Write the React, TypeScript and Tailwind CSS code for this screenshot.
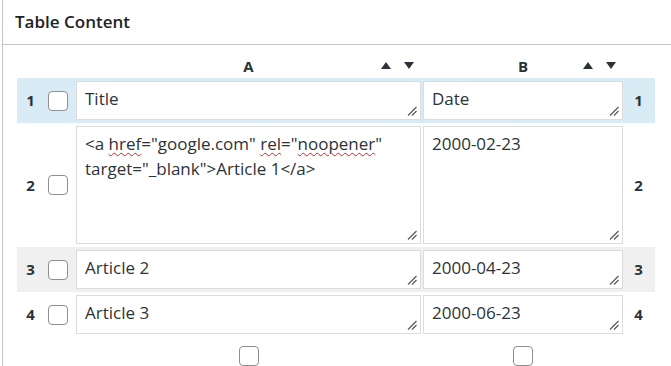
import type { ReactNode } from "react"

const font = { fontFamily: '"Open Sans", "Noto Sans", sans-serif' }

function Grip() {
  return (
    <svg
      className="absolute right-[3px] bottom-[3px]"
      width="10"
      height="10"
      viewBox="0 0 10 10"
    >
      <path d="M1 9.5 L9.5 1" stroke="#5a5a5a" strokeWidth="1.3" />
      <path d="M5 9.5 L9.5 5" stroke="#5a5a5a" strokeWidth="1.3" />
    </svg>
  )
}

function Cell({ w, h, children }: { w: string; h: string; children: ReactNode }) {
  return (
    <div
      className={`relative ${w} ${h} shrink-0 bg-white border border-[#dcdcde] px-2 pt-[4px] text-[17px] leading-[25px] text-[#2c3338]`}
    >
      {children}
      <Grip />
    </div>
  )
}

function Check() {
  return <div className="w-5 h-5 shrink-0 rounded-[4px] border border-[#8c8f94] bg-white" />
}

function Spell({ children }: { children: ReactNode }) {
  return (
    <span className="underline decoration-wavy decoration-[#e02020] decoration-1 underline-offset-[2px]">
      {children}
    </span>
  )
}

function Row({
  n,
  bg,
  h,
  a,
  b,
}: {
  n: number
  bg: string
  h: string
  a: ReactNode
  b: ReactNode
}) {
  return (
    <div className={`flex items-center py-[3px] ${bg}`}>
      <div className="w-[27px] text-center text-[15px] font-bold text-[#2c3338]">{n}</div>
      <div className="ml-[4px]">
        <Check />
      </div>
      <div className="ml-[8px] flex gap-[2px]">
        <Cell w="w-[345px]" h={h}>
          {a}
        </Cell>
        <Cell w="w-[200px]" h={h}>
          {b}
        </Cell>
      </div>
      <div className="w-[31px] text-center text-[15px] font-bold text-[#2c3338]">{n}</div>
    </div>
  )
}

function Arrows() {
  return (
    <div className="flex gap-[13px] items-center">
      <svg width="10" height="7" viewBox="0 0 10 7">
        <path d="M5 0 L10 7 L0 7 Z" fill="#2c3338" />
      </svg>
      <svg width="10" height="7" viewBox="0 0 10 7">
        <path d="M0 0 L10 0 L5 7 Z" fill="#2c3338" />
      </svg>
    </div>
  )
}

export default function App() {
  return (
    <div className="w-[671px] h-[366px] overflow-hidden bg-white" style={font}>
      <div className="ml-[2px] border-l border-[#c3c4c7] h-full">
        <div className="h-[45px] border-b border-[#c3c4c7] flex items-center pl-[12px]">
          <h2 className="text-[17px] font-semibold text-[#1d2327]">Table Content</h2>
        </div>

        <div className="pl-[14px] w-[652px]">
          {/* column headers */}
          <div className="flex h-[33px] items-end pb-[1px]">
            <div className="w-[59px]" />
            <div className="w-[345px] relative flex justify-center items-center">
              <span className="text-[15px] font-bold text-[#2c3338]">A</span>
              <div className="absolute right-[7px] top-[7px]">
                <Arrows />
              </div>
            </div>
            <div className="w-[2px]" />
            <div className="w-[200px] relative flex justify-center items-center">
              <span className="text-[15px] font-bold text-[#2c3338]">B</span>
              <div className="absolute right-[7px] top-[7px]">
                <Arrows />
              </div>
            </div>
          </div>

          <Row n={1} bg="bg-[#d9ebf5]" h="h-[39px]" a="Title" b="Date" />
          <Row
            n={2}
            bg="bg-white"
            h="h-[118px]"
            a={
              <>
                <div className="whitespace-nowrap">
                  &lt;a <Spell>href</Spell>="google.com" <Spell>rel</Spell>="<Spell>noopener</Spell>"
                </div>
                <div className="whitespace-nowrap">target="_blank"&gt;Article 1&lt;/a&gt;</div>
              </>
            }
            b="2000-02-23"
          />
          <Row n={3} bg="bg-[#f0f0f1]" h="h-[39px]" a="Article 2" b="2000-04-23" />
          <Row n={4} bg="bg-white" h="h-[39px]" a="Article 3" b="2000-06-23" />

          {/* bulk select checkboxes */}
          <div className="flex pt-[9px]">
            <div className="w-[59px]" />
            <div className="w-[345px] flex justify-center">
              <Check />
            </div>
            <div className="w-[2px]" />
            <div className="w-[200px] flex justify-center">
              <Check />
            </div>
          </div>
        </div>
      </div>
    </div>
  )
}
